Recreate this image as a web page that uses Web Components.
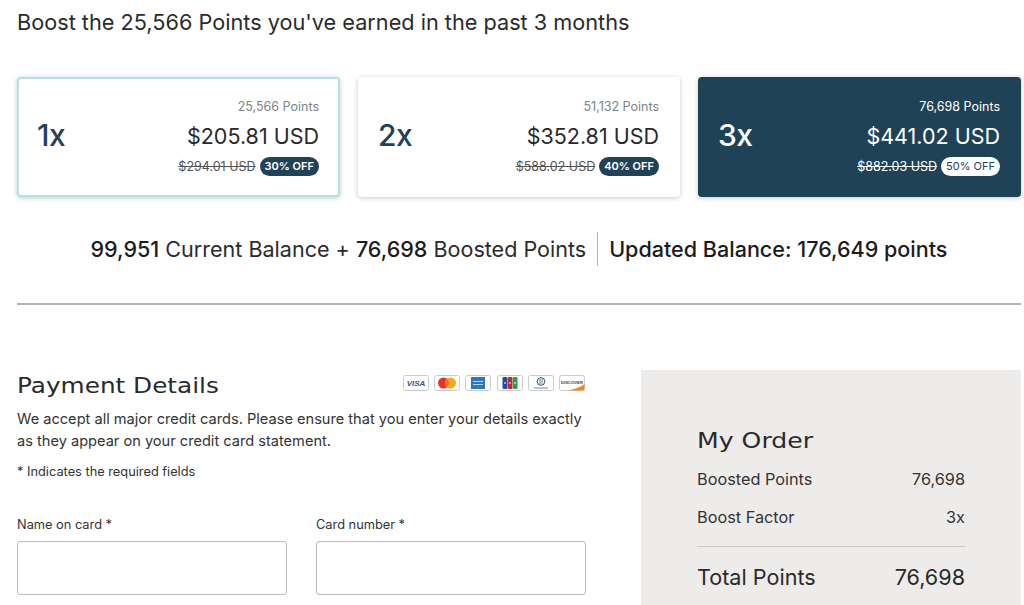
<!DOCTYPE html>
<html>
<head>
<meta charset="utf-8">
<title>Boost points</title>
<style>
  html, body { margin: 0; height: 605px; overflow: hidden; background: #fff; }
  body { font-family: Inter, "Liberation Sans", sans-serif; color: #2a2a2a; }
</style>
</head>
<body>
<boost-page>
  <boost-card slot="cards" factor="1x" points="25,566 Points" price="$205.81 USD" old="$294.01 USD" off="30% OFF" mode="selected"></boost-card>
  <boost-card slot="cards" factor="2x" points="51,132 Points" price="$352.81 USD" old="$588.02 USD" off="40% OFF"></boost-card>
  <boost-card slot="cards" factor="3x" points="76,698 Points" price="$441.02 USD" old="$882.03 USD" off="50% OFF" mode="dark"></boost-card>
  <payment-details slot="payment"></payment-details>
  <order-summary slot="order"></order-summary>
</boost-page>

<script>
// Outer page layout
const pageTemplate = document.createElement('template')
pageTemplate.innerHTML = `
  <style>
    :host { display: block; box-sizing: border-box; width: 1024px; padding: 0 3px 0 17px; }
    h1 { margin: 0; padding-top: 9px; height: 77px; box-sizing: border-box; font-size: 21.7px; line-height: 26px; font-weight: 400; color: #2b2b2b; }
    .cards { display: grid; grid-template-columns: 323px 322px 323px; column-gap: 18px; }
    .balance { display: flex; justify-content: center; align-items: center; height: 34px; margin: 35px 0 0 0; font-size: 21.55px; color: #2b2b2b; }
    .balance b { font-weight: 500; color: #1c1c1c; }
    .balance .sep { width: 1px; height: 34px; background: #d9a98c; margin: 0 11px; }
    .balance .left { white-space: pre; }
    hr { border: 0; height: 2px; background: #b4b4b4; margin: 37px 0 0 0; }
    .bottom { display: flex; justify-content: space-between; margin-top: 65px; }
  </style>
  <h1>Boost the 25,566 Points you've earned in the past 3 months</h1>
  <div class="cards"><slot name="cards"></slot></div>
  <div class="balance">
    <span class="left"><b>99,951</b> Current Balance + <b>76,698</b> Boosted Points</span>
    <span class="sep"></span>
    <b>Updated Balance: 176,649 points</b>
  </div>
  <hr>
  <div class="bottom"><slot name="payment"></slot><slot name="order"></slot></div>
`
customElements.define('boost-page', class extends HTMLElement {
  constructor () {
    super()
    this.attachShadow({ mode: 'open' }).appendChild(pageTemplate.content.cloneNode(true))
  }
})

// One boost option
const cardTemplate = document.createElement('template')
cardTemplate.innerHTML = `
  <style>
    :host { display: flex; align-items: center; justify-content: space-between; box-sizing: border-box; height: 120px; padding: 0 21px 0 20px; background: #fff; border-radius: 4px; box-shadow: 0 1px 5px rgba(0,0,0,.22); color: #1f4257; }
    :host([mode="selected"]) { border: 2px solid #b5e0ea; padding: 0 19px 0 18px; }
    :host([mode="dark"]) { background: #1f4257; color: #fff; }
    .factor { font-size: 30px; font-weight: 500; letter-spacing: -.5px; padding-bottom: 4px; }
    .right { display: flex; flex-direction: column; align-items: flex-end; }
    .points { font-size: 12.5px; line-height: 16px; color: #7d838a; }
    .price { font-size: 21.5px; line-height: 26px; margin-top: 8px; color: #2a2a2a; }
    .sale { display: flex; align-items: center; margin-top: 8px; }
    .old { font-size: 12.5px; text-decoration: line-through; color: #555; margin-right: 4px; }
    .off { font-size: 11px; font-weight: 600; line-height: 19px; height: 19px; padding: 0 5px; border-radius: 10px; background: #1f4257; color: #fff; }
    :host([mode="dark"]) .points, :host([mode="dark"]) .price, :host([mode="dark"]) .old { color: #fff; }
    :host([mode="dark"]) .off { background: #fff; color: #1f4257; font-weight: 400; }
  </style>
  <span class="factor"></span>
  <div class="right">
    <span class="points"></span>
    <span class="price"></span>
    <div class="sale"><span class="old"></span><span class="off"></span></div>
  </div>
`
customElements.define('boost-card', class extends HTMLElement {
  constructor () {
    super()
    this.attachShadow({ mode: 'open' }).appendChild(cardTemplate.content.cloneNode(true))
  }

  connectedCallback () {
    for (const name of ['factor', 'points', 'price', 'old', 'off']) {
      this.shadowRoot.querySelector('.' + name).textContent = this.getAttribute(name)
    }
  }
})

// Small credit card logo strip
const logosTemplate = document.createElement('template')
logosTemplate.innerHTML = `
  <style>
    :host { display: flex; gap: 5.2px; margin: 0 1px 4px 0; }
    svg { width: 26px; height: 16px; display: block; }
    text { font-family: "Liberation Sans", sans-serif; }
  </style>
  <svg viewBox="0 0 26 16"><rect x=".5" y=".5" width="25" height="15" rx="2" fill="#fff" stroke="#c9cdd2"/><text x="13" y="11" font-size="8" font-weight="700" font-style="italic" text-anchor="middle" fill="#3b4ea0">VISA</text></svg>
  <svg viewBox="0 0 26 16"><rect x=".5" y=".5" width="25" height="15" rx="2" fill="#fff" stroke="#c9cdd2"/><circle cx="9.500" cy="8" r="5.500" fill="#e2352a"/><circle cx="16.500" cy="8" r="5.500" fill="#f5a623"/><path d="M13 3.800a5.500 5.500 0 0 1 0 8.400a5.500 5.500 0 0 1 0-8.400z" fill="#f0701f"/></svg>
  <svg viewBox="0 0 26 16"><rect x=".5" y=".5" width="25" height="15" rx="2" fill="#fff" stroke="#c9cdd2"/><rect x="6" y="2" width="14" height="12" fill="#2e77bc"/><path d="M8 6.500h10M8 9.500h10" stroke="#bcd7ef" stroke-width="1"/></svg>
  <svg viewBox="0 0 26 16"><rect x=".5" y=".5" width="25" height="15" rx="2" fill="#fff" stroke="#c9cdd2"/><rect x="5.500" y="2" width="4.800" height="12" rx="1.300" fill="#1c4f9c"/><rect x="10.600" y="2" width="4.800" height="12" rx="1.300" fill="#c8243a"/><rect x="15.700" y="2" width="4.800" height="12" rx="1.300" fill="#2f9a48"/><path d="M7 8h2M12 8h2M17 8h2" stroke="#fff" stroke-width="1.200"/></svg>
  <svg viewBox="0 0 26 16"><rect x=".5" y=".5" width="25" height="15" rx="2" fill="#fff" stroke="#c9cdd2"/><circle cx="13" cy="6.500" r="3.800" fill="none" stroke="#2a4f80" stroke-width="1"/><path d="M12 4v5M14 4v5" stroke="#2a4f80" stroke-width=".7"/><path d="M6 13h14" stroke="#7a8794" stroke-width="1"/></svg>
  <svg viewBox="0 0 26 16"><rect x=".5" y=".5" width="25" height="15" rx="2" fill="#fff" stroke="#c9cdd2"/><path d="M9 15.500Q20 13 25.500 9V13.500a2 2 0 0 1-2 2z" fill="#ef8a22"/><text x="13" y="8.500" font-size="4.200" font-weight="700" text-anchor="middle" fill="#444">DISCOVER</text></svg>
`
customElements.define('card-logos', class extends HTMLElement {
  constructor () {
    super()
    this.attachShadow({ mode: 'open' }).appendChild(logosTemplate.content.cloneNode(true))
  }
})

// Labelled text input
const fieldTemplate = document.createElement('template')
fieldTemplate.innerHTML = `
  <style>
    :host { display: block; width: 270px; }
    label { display: block; font-size: 12.8px; line-height: 16px; color: #333; margin-bottom: 8px; }
    .input { box-sizing: border-box; height: 54px; border: 1px solid #b9b9b9; border-radius: 3px; background: #fff; }
  </style>
  <label><slot></slot></label>
  <div class="input"></div>
`
customElements.define('text-field', class extends HTMLElement {
  constructor () {
    super()
    this.attachShadow({ mode: 'open' }).appendChild(fieldTemplate.content.cloneNode(true))
  }
})

// Payment form
const paymentTemplate = document.createElement('template')
paymentTemplate.innerHTML = `
  <style>
    :host { display: block; width: 569px; }
    .head { display: flex; justify-content: space-between; align-items: center; height: 30px; }
    h2 { margin: 0; font-family: "DejaVu Sans", sans-serif; font-size: 21.5px; font-weight: 400; color: #2a2a2a; transform: scaleX(1.15); transform-origin: left; }
    p { margin: 8px 0 0 0; font-size: 14.6px; line-height: 22px; color: #333; }
    .note { margin: 12px 0 0 0; font-size: 12.8px; line-height: 16px; }
    .fields { display: flex; justify-content: space-between; margin-top: 37px; }
  </style>
  <div class="head"><h2>Payment Details</h2><card-logos></card-logos></div>
  <p>We accept all major credit cards. Please ensure that you enter your details exactly as they appear on your credit card statement.</p>
  <p class="note">* Indicates the required fields</p>
  <div class="fields">
    <text-field>Name on card *</text-field>
    <text-field>Card number *</text-field>
  </div>
`
customElements.define('payment-details', class extends HTMLElement {
  constructor () {
    super()
    this.attachShadow({ mode: 'open' }).appendChild(paymentTemplate.content.cloneNode(true))
  }
})

// Order panel
const orderTemplate = document.createElement('template')
orderTemplate.innerHTML = `
  <style>
    :host { display: block; box-sizing: border-box; width: 380px; height: 235px; padding: 56px 56px 0; background: #eeecea; color: #333; }
    h2 { margin: 0 0 4px 0; font-family: "DejaVu Sans", sans-serif; font-size: 21.5px; line-height: 30px; font-weight: 400; color: #2a2a2a; transform: scaleX(1.17); transform-origin: left; }
    .row { display: flex; justify-content: space-between; font-size: 16.3px; line-height: 38px; }
    .total { border-top: 1px solid #c9c9c7; margin-top: 10px; padding-top: 11px; font-size: 21.6px; color: #2a2a2a; }
  </style>
  <h2>My Order</h2>
  <div class="row"><span>Boosted Points</span><span>76,698</span></div>
  <div class="row"><span>Boost Factor</span><span>3x</span></div>
  <div class="row total"><span>Total Points</span><span>76,698</span></div>
`
customElements.define('order-summary', class extends HTMLElement {
  constructor () {
    super()
    this.attachShadow({ mode: 'open' }).appendChild(orderTemplate.content.cloneNode(true))
  }
})
</script>
</body>
</html>
